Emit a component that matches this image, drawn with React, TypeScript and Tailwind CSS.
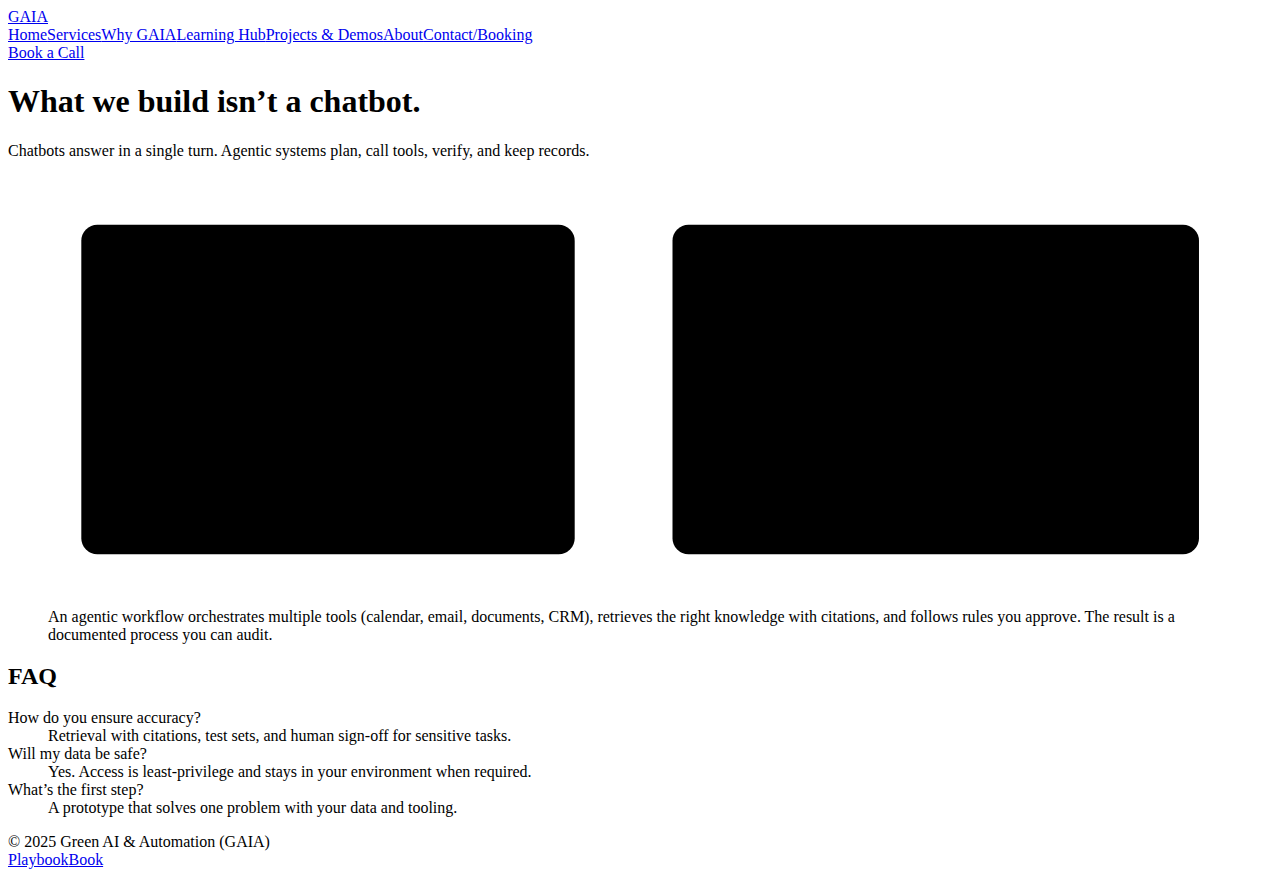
import React from "react";

const link = "text-[#0000ee] underline";

export default function App() {
  return (
    <div className="p-2 font-['Liberation_Serif',serif] text-[16px] leading-[normal] text-black bg-white min-h-[878px]">
      <header>
        <div>
          <a href="#" className={link}>GAIA</a>
        </div>
        <nav>
          <a href="#" className={link}>Home</a>
          <a href="#" className={link}>Services</a>
          <a href="#" className={link}>Why GAIA</a>
          <a href="#" className={link}>Learning Hub</a>
          <a href="#" className={link}>Projects &amp; Demos</a>
          <a href="#" className={link}>About</a>
          <a href="#" className={link}>Contact/Booking</a>
        </nav>
        <div>
          <a href="#" className={link}>Book a Call</a>
        </div>
      </header>
      <main>
        <h1 className="text-[32px] font-bold my-[21.44px]">What we build isn’t a chatbot.</h1>
        <p className="my-4">Chatbots answer in a single turn. Agentic systems plan, call tools, verify, and keep records.</p>
        <figure className="mx-10 my-4">
          <svg width="1184" height="432.4" viewBox="0 0 1184 432.4" className="block">
            <rect x="33.3" y="48.7" width="493.4" height="329.5" rx="16" fill="#000" />
            <rect x="624.5" y="48.7" width="526.5" height="329.5" rx="16" fill="#000" />
          </svg>
          <figcaption>
            An agentic workflow orchestrates multiple tools (calendar, email, documents, CRM), retrieves the right knowledge with citations, and follows rules you approve. The result is a documented process you can audit.
          </figcaption>
        </figure>
        <section>
          <h2 className="text-[24px] font-bold mt-[18.92px] mb-[18.92px]">FAQ</h2>
          <dl className="my-4">
            <dt>How do you ensure accuracy?</dt>
            <dd className="ml-10">Retrieval with citations, test sets, and human sign-off for sensitive tasks.</dd>
            <dt>Will my data be safe?</dt>
            <dd className="ml-10">Yes. Access is least-privilege and stays in your environment when required.</dd>
            <dt>What’s the first step?</dt>
            <dd className="ml-10">A prototype that solves one problem with your data and tooling.</dd>
          </dl>
        </section>
      </main>
      <footer>
        <div>© 2025 Green AI &amp; Automation (GAIA)</div>
        <div>
          <a href="#" className={link}>Playbook</a>
          <a href="#" className={link}>Book</a>
        </div>
      </footer>
    </div>
  );
}
